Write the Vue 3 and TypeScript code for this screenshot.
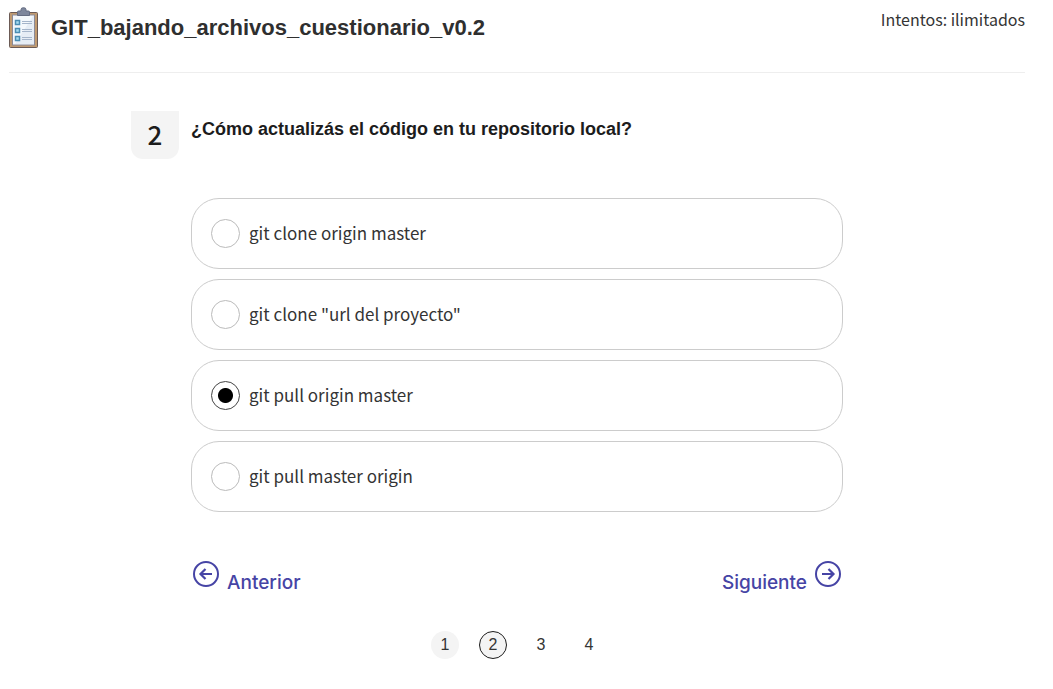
<script setup lang="ts">
import { ref } from 'vue'

interface Option {
  id: string
  text: string
}

const options: Option[] = [
  { id: 'a', text: 'git clone origin master' },
  { id: 'b', text: 'git clone "url del proyecto"' },
  { id: 'c', text: 'git pull origin master' },
  { id: 'd', text: 'git pull master origin' },
]

const selected = ref('c')
const current = ref(2)
const visited = ref<number[]>([1, 2])
const pages = [1, 2, 3, 4]

function goTo(page: number) {
  if (page < 1 || page > pages.length) return
  current.value = page
  if (!visited.value.includes(page)) visited.value.push(page)
}
</script>

<template>
  <div class="page">
    <header class="header">
      <svg class="clipboard" width="30" height="42" viewBox="0 0 30 42" aria-hidden="true">
        <rect x="0.5" y="5.5" width="28" height="35" rx="1" fill="#c09a70" stroke="#6b5a55" />
        <rect x="3.5" y="8" width="22" height="30" fill="#f4f8fc" stroke="#8a8a98" />
        <path d="M24 9h1v28h-19z" fill="#e6edf5" />
        <path d="M8.500 8.500V5q0-1 1-1h2.500V2.500Q12 0.700 14.500 0.700T17 2.500V4h2.500q1 0 1 1v3.500z" fill="#7d869c" stroke="#646c82" />
        <g fill="#a8dcf0" stroke="#4a8db3" stroke-width="1.500">
          <rect x="6.500" y="13.500" width="4" height="4" />
          <rect x="6.500" y="21.500" width="4" height="4" />
          <rect x="6.500" y="29.500" width="4" height="4" />
        </g>
        <path d="M13 14.500h10M13 16.500h10M13 22.500h10M13 24.500h10M13 30.500h10M13 32.500h10" stroke="#a5b5ca" />
      </svg>
      <h1 class="title">GIT_bajando_archivos_cuestionario_v0.2</h1>
      <p class="attempts">Intentos: ilimitados</p>
    </header>

    <main class="quiz">
      <span class="number">{{ current }}</span>
      <form class="question" @submit.prevent>
        <fieldset class="group">
          <legend class="prompt">¿Cómo actualizás el código en tu repositorio local?</legend>
          <div class="options">
            <label v-for="option in options" :key="option.id" class="option" :for="`option-${option.id}`">
              <input
                :id="`option-${option.id}`"
                v-model="selected"
                class="radio"
                type="radio"
                name="answer"
                :value="option.id"
              />
              <span class="option-text">{{ option.text }}</span>
            </label>
          </div>
        </fieldset>

        <div class="steps">
          <button class="step" type="button" @click="goTo(current - 1)">
            <svg width="26" height="26" viewBox="0 0 26 26" fill="none" stroke="currentColor" stroke-width="2" aria-hidden="true">
              <circle cx="13" cy="13" r="12" />
              <path d="M19 13H8M12.500 8L7.500 13l5 5" stroke-width="2.200" />
            </svg>
            <span class="step-text">Anterior</span>
          </button>
          <button class="step" type="button" @click="goTo(current + 1)">
            <span class="step-text">Siguiente</span>
            <svg width="26" height="26" viewBox="0 0 26 26" fill="none" stroke="currentColor" stroke-width="2" aria-hidden="true">
              <circle cx="13" cy="13" r="12" />
              <path d="M7 13H18M13.500 8l5 5-5 5" stroke-width="2.200" />
            </svg>
          </button>
        </div>

        <nav class="pager" aria-label="Preguntas">
          <button
            v-for="page in pages"
            :key="page"
            type="button"
            class="page-button"
            :class="{ visited: visited.includes(page), current: page === current }"
            :aria-current="page === current ? 'step' : undefined"
            @click="goTo(page)"
          >
            {{ page }}
          </button>
        </nav>
      </form>
    </main>
  </div>
</template>

<style>
body {
  background: #fff;
}
</style>

<style scoped>
.page {
  padding: 7px 28px 24px 9px;
  color: #343434;
  font-family: "Noto Sans CJK SC", "Noto Sans", sans-serif;
}

.header {
  display: flex;
  align-items: flex-start;
  padding-bottom: 23px;
  border-bottom: 1px solid #eee;
}

.clipboard {
  flex: none;
}

.title {
  flex: 1;
  margin: 8px 0 0 12px;
  color: #2f2f2f;
  font: bold 22px/26px "Liberation Sans", Arial, sans-serif;
}

.attempts {
  margin: 0;
  font-size: 16px;
  line-height: 24px;
}

.quiz {
  display: grid;
  grid-template-columns: 48px minmax(0, 652px) 48px;
  justify-content: center;
  align-items: start;
  gap: 12px;
  padding-top: 38px;
}

.number {
  box-sizing: border-box;
  height: 48px;
  border-radius: 0 0 12px 12px;
  background: #f4f4f4;
  color: #1c1c1c;
  font-size: 26px;
  font-weight: 500;
  line-height: 46px;
  text-align: center;
}

.question {
  min-width: 0;
}

.group {
  min-width: 0;
  margin: 0;
  padding: 0;
  border: 0;
}

.prompt {
  padding: 6px 0 0;
  color: #1c1c1c;
  font: bold 18px/24px "Liberation Sans", Arial, sans-serif;
}

.options {
  display: grid;
  gap: 10px;
  padding-top: 57px;
}

.option {
  display: flex;
  align-items: center;
  gap: 9px;
  padding: 20px 19px;
  border: 1px solid #ccc;
  border-radius: 28px;
  cursor: pointer;
}

.option-text {
  padding-bottom: 2px;
  font-size: 17px;
  line-height: 26px;
}

.radio {
  appearance: none;
  box-sizing: border-box;
  flex: none;
  width: 29px;
  height: 29px;
  margin: 0;
  border: 1px solid #bbb;
  border-radius: 50%;
  cursor: pointer;
}

.radio:checked {
  border-color: #444;
  background: radial-gradient(circle, #000 7px, transparent 8px);
}

.steps {
  display: flex;
  justify-content: space-between;
  padding: 49px 2px 0;
}

.step {
  display: flex;
  align-items: flex-start;
  gap: 8px;
  padding: 0;
  border: 0;
  background: none;
  color: #4644a5;
  font: 500 19px/24px Inter, sans-serif;
  cursor: pointer;
}

.step-text {
  padding-top: 10px;
}

.pager {
  display: flex;
  justify-content: center;
  gap: 20px;
  padding-top: 36px;
}

.page-button {
  box-sizing: border-box;
  width: 28px;
  height: 28px;
  padding: 0;
  border: 1px solid transparent;
  border-radius: 50%;
  background: none;
  color: #343434;
  font: 16px/26px "Liberation Sans", Arial, sans-serif;
  cursor: pointer;
}

.visited {
  background: #f4f4f4;
}

.current {
  border-color: #1c1c1c;
}
</style>
